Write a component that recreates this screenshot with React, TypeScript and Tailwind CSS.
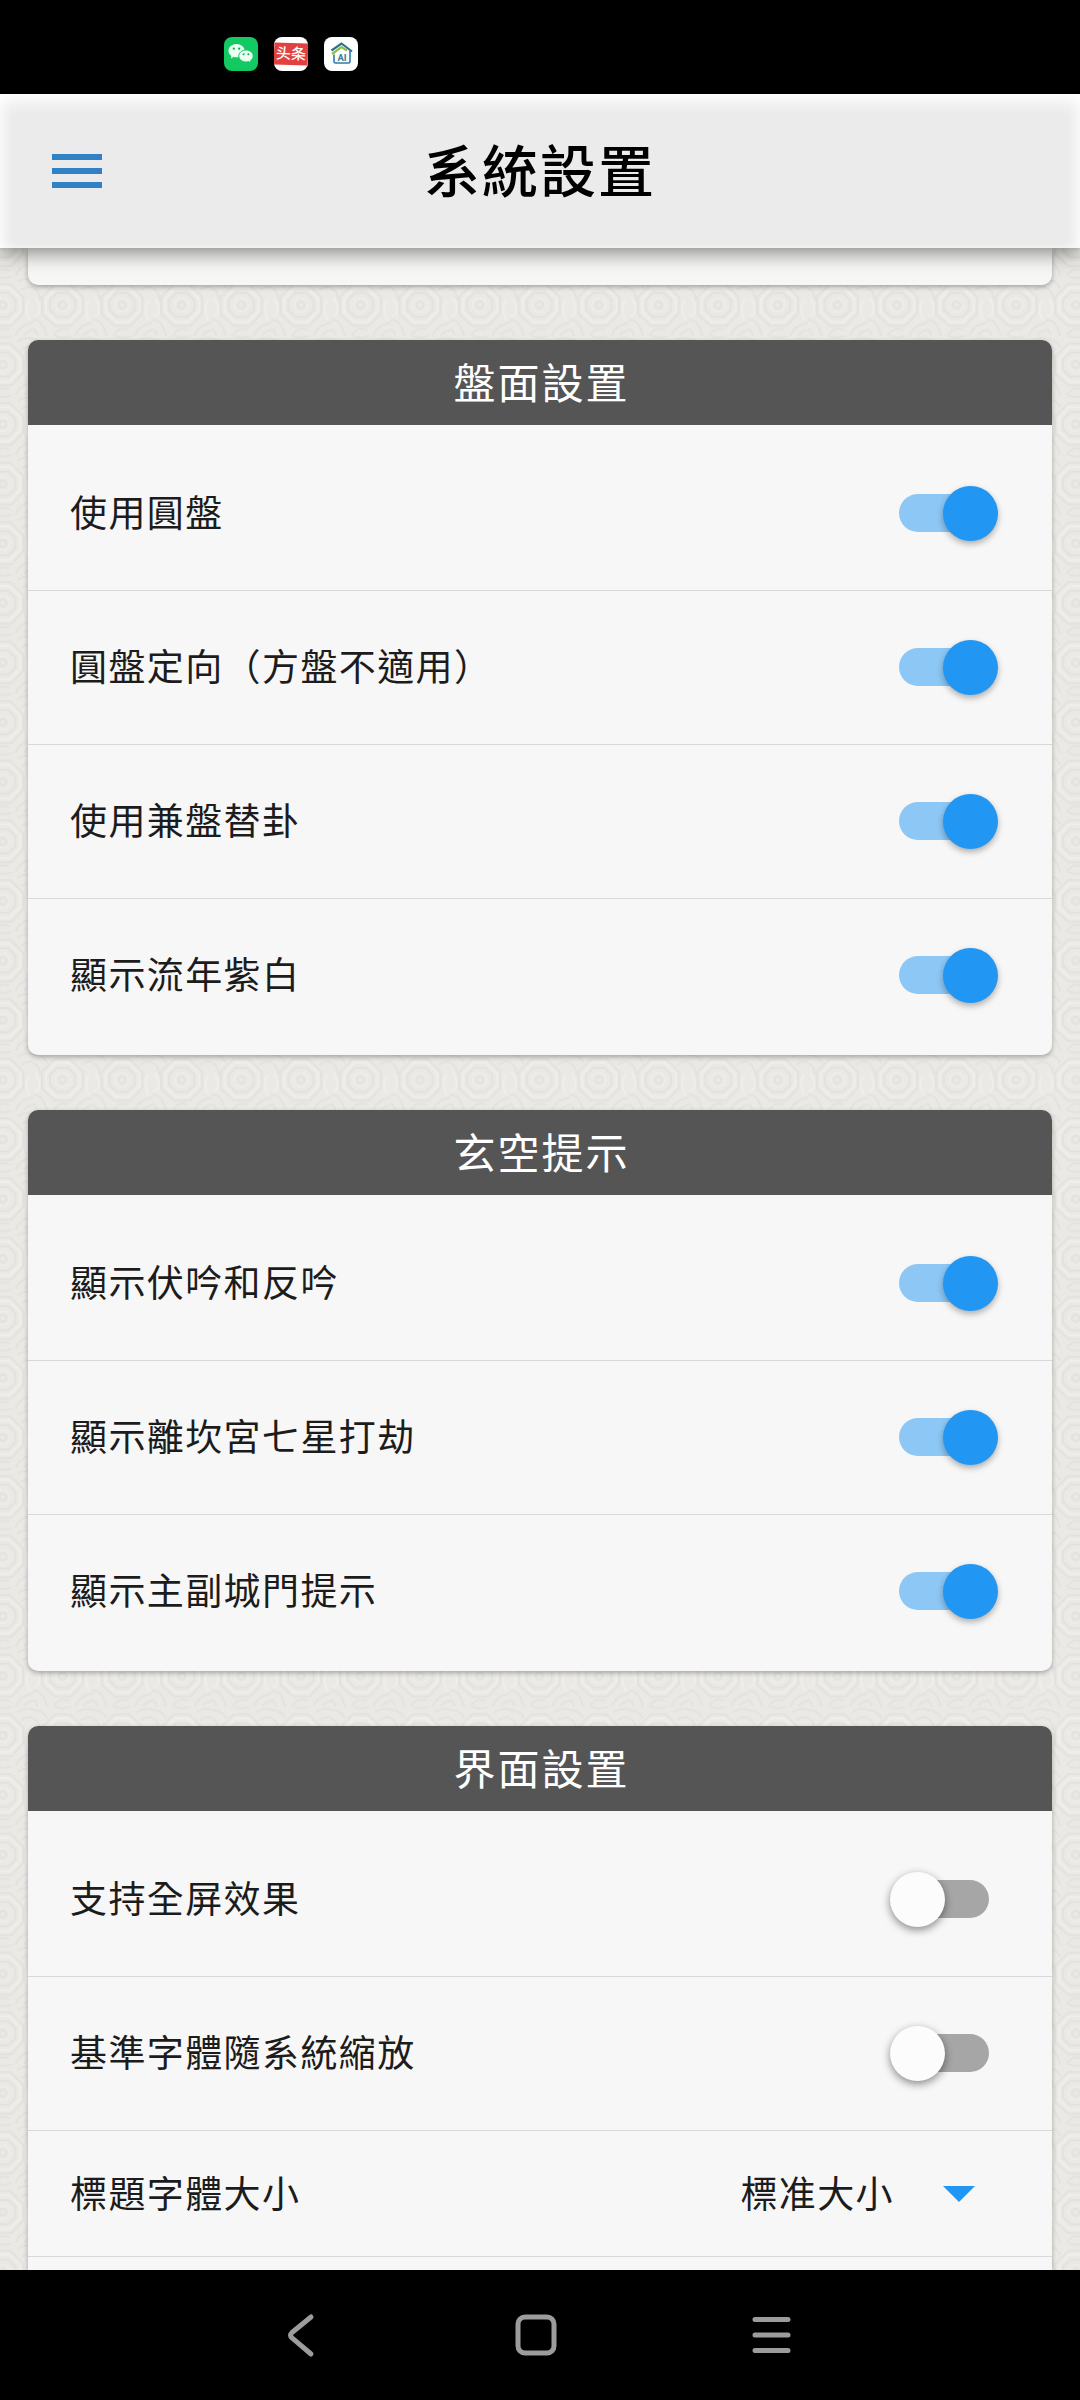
import React from 'react';

interface Setting {
  label: string;
  enabled: boolean;
}

interface SettingsCardProps {
  title: string;
  settings: Setting[];
  children?: React.ReactNode;
}

const Backdrop: React.FC = () => (
  <svg className="absolute inset-0 w-full h-full" aria-hidden="true">
    <defs>
      <pattern id="swirl" width="59.6" height="59.6" x="33" y="28" patternUnits="userSpaceOnUse">
        <g fill="none" strokeWidth="2" stroke="#e3e2de">
          <path d="M-4 4q14-2 18 8M-6 12q12-2 13 12M44 6q8-6 20-2M48 14q6-5 14-2M20-2q8 8 22 0" />
          <path d="M-4 46q12-8 18 14M-4 54q7-4 9 8M20 62q4-12 16-8M42 62q2-14 22-16M50 62q2-8 12-8" />
          <path d="M3 22q8 18-2 18M56 24q-6 8 0 20" stroke="#efeeeb" />
          <path d="M22 8h15l13 13v16L38 50H22L9 38V21z" fill="#eae9e5" />
          <path d="M23 12h13l11 11v12L36 46H23L13 36V23z" stroke="#efeeeb" />
          <path d="M24 17h11l7 7v10l-7 7H24l-7-7V24z" />
          <circle cx="29.500" cy="29" r="7" stroke="#edece9" />
          <circle cx="29.500" cy="29" r="3.500" />
        </g>
      </pattern>
    </defs>
    <rect width="100%" height="100%" fill="url(#swirl)" />
  </svg>
);

const Toggle: React.FC<{ enabled: boolean }> = ({ enabled }) => (
  <div className={`relative w-[90px] h-[38px] rounded-full mr-[63px] mb-[2px] ${enabled ? 'bg-[#8cc7f5]' : 'bg-[#a6a6a6]'}`}>
    <div
      className={`absolute -top-[8px] size-[55px] rounded-full ${
        enabled
          ? 'left-[43.5px] bg-[#2196f3] shadow-[0_3px_6px_rgba(0,0,0,0.3)]'
          : '-left-[9px] bg-[#fcfcfc] shadow-[0_3px_8px_rgba(0,0,0,0.45)]'
      }`}
    />
  </div>
);

const SettingsCard: React.FC<SettingsCardProps> = ({ title, settings, children }) => (
  <section className="shrink-0 rounded-[10px] overflow-hidden bg-[#f7f7f7] pb-[2px] shadow-[0_2px_5px_rgba(0,0,0,0.3)]">
    <h2 className="h-[85px] mb-[12px] pb-[3px] pl-[3px] flex items-center justify-center bg-[#555555] text-white text-[42px] tracking-[2px] font-normal">
      {title}
    </h2>
    <div className="divide-y divide-[#d8d8d8]">
      {settings.map((setting) => (
        <div key={setting.label} className="h-[154px] flex items-center justify-between pl-[42px]">
          <span className="pb-[5px]">{setting.label}</span>
          <Toggle enabled={setting.enabled} />
        </div>
      ))}
      {children}
    </div>
  </section>
);

const StatusBar: React.FC = () => (
  <div className="h-[94px] shrink-0 bg-black flex gap-4 pl-[224px] pt-[37px] tracking-normal">
    <svg width="34" height="34" viewBox="0 0 34 34">
      <rect width="34" height="34" rx="8" fill="#12c962" />
      <path d="M12.500 7C8 7 4.500 10 4.500 13.700c0 2.100 1.100 3.900 2.900 5.200l-.7 2.500 2.900-1.500c.9.300 1.900.4 2.900.4 4.500 0 8.100-2.900 8.100-6.600S17 7 12.500 7z" fill="#e9fff1" />
      <path d="M22 13c-4 0-7.200 2.700-7.200 6s3.200 6 7.200 6c.9 0 1.700-.1 2.500-.4l2.600 1.400-.6-2.300c1.700-1.100 2.700-2.800 2.700-4.700 0-3.300-3.200-6-7.200-6z" fill="#e9fff1" stroke="#12c962" strokeWidth="1" />
      <g fill="#12a853">
        <circle cx="9.800" cy="11.700" r="1.100" />
        <circle cx="15.200" cy="11.700" r="1.100" />
        <circle cx="19.600" cy="17.300" r="1" />
        <circle cx="24.400" cy="17.300" r="1" />
      </g>
    </svg>
    <div className="size-[34px] rounded-[8px] overflow-hidden bg-white flex items-center">
      <div className="w-full h-[22px] rotate-2 bg-[#e3413f] text-white text-[15px] leading-[20px] font-medium text-center whitespace-nowrap">
        头条
      </div>
    </div>
    <svg width="34" height="34" viewBox="0 0 34 34">
      <rect width="34" height="34" rx="8" fill="#fdfefe" />
      <g fill="none" strokeWidth="2.200">
        <path d="M7.500 13.500 17.500 6.500 28 14.500" stroke="#2f6f8f" />
        <path d="M8 17 17.500 10 23 13.500" stroke="#8fc04a" />
        <path d="M10 17.500v7q0 1.500 1.500 1.500h13q1.500 0 1.500-1.500V14" stroke="#3579a8" strokeWidth="1.600" />
      </g>
      <text x="18" y="23.500" textAnchor="middle" fontSize="9.500" fontWeight="700" fontFamily="Roboto, sans-serif" fill="#2f8090">AI</text>
    </svg>
  </div>
);

const Header: React.FC = () => (
  <header className="relative z-10 shrink-0 h-[154px] bg-[#ebebeb] shadow-[0_4px_20px_rgba(0,0,0,0.5)]">
    <div className="h-full flex items-center justify-center shadow-[inset_0_8px_16px_#ffffff,inset_6px_0_16px_-8px_#ffffff,inset_-6px_0_16px_-8px_#ffffff]">
      <div className="w-[52px] ml-[52px] flex flex-col gap-[8px]">
        <div className="h-[6px] w-[50px] bg-[#3182c4]" />
        <div className="h-[6px] w-[50px] bg-[#3182c4]" />
        <div className="h-[6px] w-[50px] bg-[#3182c4]" />
      </div>
      <h1 className="flex-1 mr-[104px] pb-[6px] text-center text-[56px] tracking-[2px] font-medium text-black">系統設置</h1>
    </div>
  </header>
);

const NavBar: React.FC = () => (
  <nav className="relative z-10 h-[130px] shrink-0 bg-black text-[#9c9c9c]">
    <svg width="1080" height="130" fill="none" stroke="currentColor" strokeWidth="5" strokeLinecap="round" strokeLinejoin="round">
      <path d="M311 47 292 62.500q-3 2.700 0 5.400L311 84" />
      <rect x="518" y="47" width="36" height="36" rx="7" />
      <path d="M755 49.500h33M755 65h33M755 80.500h33" />
    </svg>
  </nav>
);

export default function App() {
  return (
    <div
      lang="zh-Hant"
      className="w-[1080px] h-[2400px] overflow-hidden flex flex-col bg-[#eae9e5] text-[#1c1c1c] text-[37px] leading-none tracking-[1.400px] font-['Noto_Sans_CJK_TC',sans-serif]"
    >
      <StatusBar />
      <Header />
      <main className="relative flex-1 min-h-0 overflow-hidden">
        <Backdrop />
        <div className="relative px-7 flex flex-col gap-[55px]">
          <div className="h-[37px] shrink-0 rounded-b-[10px] bg-[#f7f7f5] shadow-[0_2px_5px_rgba(0,0,0,0.3)]" />
          <SettingsCard
            title="盤面設置"
            settings={[
              { label: '使用圓盤', enabled: true },
              { label: '圓盤定向（方盤不適用）', enabled: true },
              { label: '使用兼盤替卦', enabled: true },
              { label: '顯示流年紫白', enabled: true },
            ]}
          />
          <SettingsCard
            title="玄空提示"
            settings={[
              { label: '顯示伏吟和反吟', enabled: true },
              { label: '顯示離坎宮七星打劫', enabled: true },
              { label: '顯示主副城門提示', enabled: true },
            ]}
          />
          <SettingsCard
            title="界面設置"
            settings={[
              { label: '支持全屏效果', enabled: false },
              { label: '基準字體隨系統縮放', enabled: false },
            ]}
          >
            <div className="h-[126px] flex items-center pl-[42px] pr-[77px]">
              <span className="flex-1 pb-[2px]">標題字體大小</span>
              <span className="pb-[2px]">標准大小</span>
              <svg className="ml-[49px]" width="32" height="16" viewBox="0 0 32 16">
                <path d="M0 0h32L16 16z" fill="#2196f3" />
              </svg>
            </div>
            <div className="h-[126px]" />
          </SettingsCard>
        </div>
      </main>
      <NavBar />
    </div>
  );
}
